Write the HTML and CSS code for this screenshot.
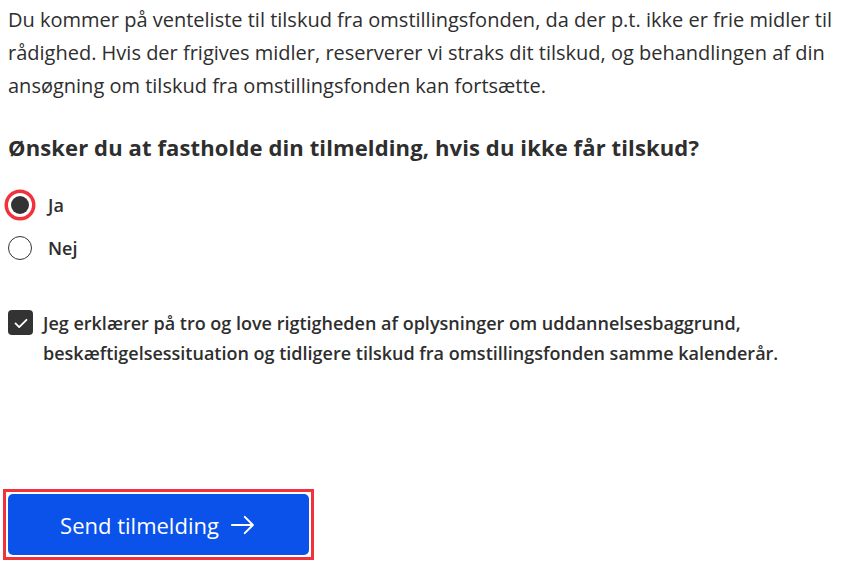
FILE: index.html
```html
<!DOCTYPE html>
<html lang="da">
<head>
<meta charset="utf-8">
<title>Tilmelding</title>
<link rel="stylesheet" href="styles.css">
</head>
<body>
<main class="page">
  <p class="intro">Du kommer på venteliste til tilskud fra omstillingsfonden, da der p.t. ikke er frie midler til rådighed. Hvis der frigives midler, reserverer vi straks dit tilskud, og behandlingen af din ansøgning om tilskud fra omstillingsfonden kan fortsætte.</p>

  <h2 class="question">Ønsker du at fastholde din tilmelding, hvis du ikke får tilskud?</h2>

  <div class="radios">
    <label class="radio">
      <span class="radio-dot radio-dot--checked radio-dot--focus"></span>
      <span class="radio-label">Ja</span>
    </label>
    <label class="radio">
      <span class="radio-dot"></span>
      <span class="radio-label">Nej</span>
    </label>
  </div>

  <label class="check">
    <span class="check-box">
      <svg viewBox="0 0 24 24" width="22" height="22" aria-hidden="true"><path d="M6 12.5l4 4L18 8.5" fill="none" stroke="#fff" stroke-width="2" stroke-linecap="round" stroke-linejoin="round"/></svg>
    </span>
    <span class="check-label">Jeg erklærer på tro og love rigtigheden af oplysninger om uddannelsesbaggrund, beskæftigelsessituation og tidligere tilskud fra omstillingsfonden samme kalenderår.</span>
  </label>

  <div class="actions">
    <div class="focus-ring">
      <button class="send" type="button">Send tilmelding
        <svg viewBox="0 0 24 24" width="28" height="28" aria-hidden="true"><path d="M2.5 12h18M13.5 5l7 7-7 7" fill="none" stroke="#fff" stroke-width="1.7" stroke-linecap="round" stroke-linejoin="round"/></svg>
      </button>
    </div>
  </div>
</main>
</body>
</html>
```

FILE: styles.css
```css
html, body {
  margin: 0;
  padding: 0;
  background: #fff;
}

body {
  font-family: "Open Sans", "Noto Sans", sans-serif;
  color: #2e2e2e;
}

.page {
  padding: 3px 8px 0 8px;
}

.intro {
  margin: 0;
  font-size: 20px;
  line-height: 33px;
}

.question {
  margin: 30px 0 0 0;
  font-size: 22px;
  line-height: 30px;
  font-weight: 700;
  letter-spacing: 0.12px;
}

.radios {
  margin-top: 31px;
  display: flex;
  flex-direction: column;
  gap: 19px;
}

.radio {
  display: flex;
  align-items: center;
  gap: 16px;
}

.radio-dot {
  flex: none;
  width: 24px;
  height: 24px;
  box-sizing: border-box;
  border: 1.5px solid #333;
  border-radius: 50%;
  display: flex;
  align-items: center;
  justify-content: center;
}

.radio-dot--checked::after {
  content: "";
  width: 18px;
  height: 18px;
  border-radius: 50%;
  background: #333;
}

.radio-dot--focus {
  border: 0;
  box-shadow: 0 0 0 3.5px #f2323a;
}

.radio-label {
  font-size: 18px;
  font-weight: 600;
  line-height: 24px;
}

.check {
  margin-top: 48px;
  display: flex;
  align-items: flex-start;
  gap: 10px;
}

.check-box {
  flex: none;
  width: 25px;
  height: 25px;
  margin-top: 2px;
  border-radius: 4px;
  background: #333;
  display: flex;
  align-items: center;
  justify-content: center;
}

.check-label {
  font-size: 18px;
  font-weight: 600;
  line-height: 30px;
}

.actions {
  margin-top: 121px;
  display: flex;
}

.focus-ring {
  display: flex;
  margin-left: -5px;
  padding: 2px;
  border: 3px solid #f2323a;
}

.send {
  display: flex;
  align-items: center;
  justify-content: center;
  gap: 10px;
  width: 301px;
  height: 61px;
  border: 0;
  border-radius: 5px;
  background: #0b52ea;
  color: #fff;
  font-family: inherit;
  font-size: 22px;
  cursor: pointer;
}
```
